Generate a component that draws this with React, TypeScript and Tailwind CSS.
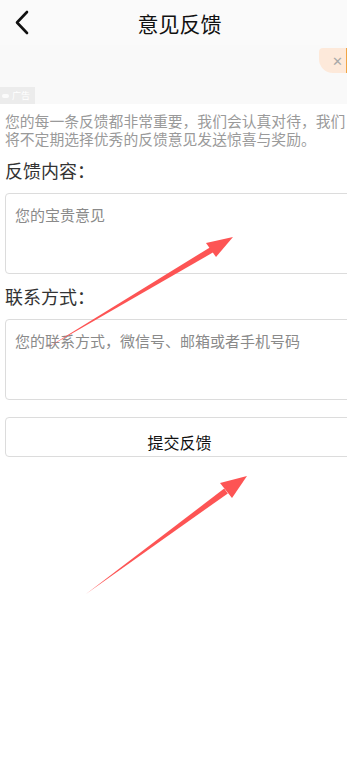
const font = { fontFamily: '"Noto Sans CJK SC", "Noto Sans", sans-serif' };

const Arrows = () => (
    <svg className="absolute inset-0 pointer-events-none" width="347" height="767" viewBox="0 0 347 767">
        {/* upper arrow */}
        <polygon points="45,349 214.5,251.6 211.5,246.4" fill="#fd5454" />
        <polygon points="233,237 206,243 216,257" fill="#fd5454" />
        {/* lower arrow */}
        <polygon points="86,594 227.8,493.4 224.2,488.6" fill="#fd5454" />
        <polygon points="247,476 220,483 232,498" fill="#fd5454" />
    </svg>
);

export default function App() {
    return (
        <div className="relative w-[347px] h-[767px] overflow-hidden bg-white" style={font}>
            <div className="w-[359px]">
                {/* Header */}
                <div className="h-[45px] bg-[#fafafa] flex items-center justify-center relative">
                    <svg className="absolute left-[13px] top-[10px]" width="18" height="25" viewBox="0 0 18 25">
                        <path d="M14 2 L4 12.5 L14 23" fill="none" stroke="#111" strokeWidth="2.6" strokeLinecap="round" strokeLinejoin="round" />
                    </svg>
                    <h1 className="text-[21px] leading-none text-[#111] mt-[1px]">意见反馈</h1>
                </div>

                {/* Ad */}
                <div className="h-[59px] bg-[#f9f9f9] relative">
                    <div className="absolute right-[12px] top-[3px] w-[28px] h-[25px] bg-[#fde9da] rounded-bl-[14px] rounded-tl-[4px] flex items-center justify-end pr-[4px]">
                        <span className="text-[#a9a9a9] text-[13px] leading-none font-light">✕</span>
                    </div>
                    <div className="absolute right-[11px] top-[3px] w-[2px] h-[25px] bg-[#f1a545]" />
                    <div className="absolute left-0 bottom-0 w-[35px] h-[17px] bg-[#ececec] flex items-center gap-[3px] pl-[2px]">
                        <span className="w-[7px] h-[4px] rounded-full bg-white/80" />
                        <span className="text-[9px] leading-none text-white">广告</span>
                    </div>
                </div>

                {/* Body */}
                <div className="px-[5px]">
                    <p className="mt-[8px] w-[345px] text-[14.8px] leading-[18px] text-[#9a9a9a]">
                        您的每一条反馈都非常重要，我们会认真对待，我们将不定期选择优秀的反馈意见发送惊喜与奖励。
                    </p>

                    <div className="mt-[10px] text-[18px] leading-[24px] text-[#333]">反馈内容：</div>
                    <div className="mt-[11px] h-[81px] border border-[#dcdcdc] rounded-[4px] px-[9px] pt-[8px]">
                        <span className="text-[15px] leading-[20px] text-[#8a8a8a]">您的宝贵意见</span>
                    </div>

                    <div className="mt-[10px] text-[18px] leading-[24px] text-[#333]">联系方式：</div>
                    <div className="mt-[11px] h-[81px] border border-[#dcdcdc] rounded-[4px] px-[9px] pt-[8px]">
                        <span className="text-[15px] leading-[20px] text-[#8a8a8a]">您的联系方式，微信号、邮箱或者手机号码</span>
                    </div>

                    <button className="mt-[17px] w-full h-[40px] border border-[#dcdcdc] rounded-[4px] bg-white flex items-center justify-center pt-[9px]">
                        <span className="text-[16px] leading-none text-[#111]">提交反馈</span>
                    </button>
                </div>
            </div>
            <Arrows />
        </div>
    );
}
